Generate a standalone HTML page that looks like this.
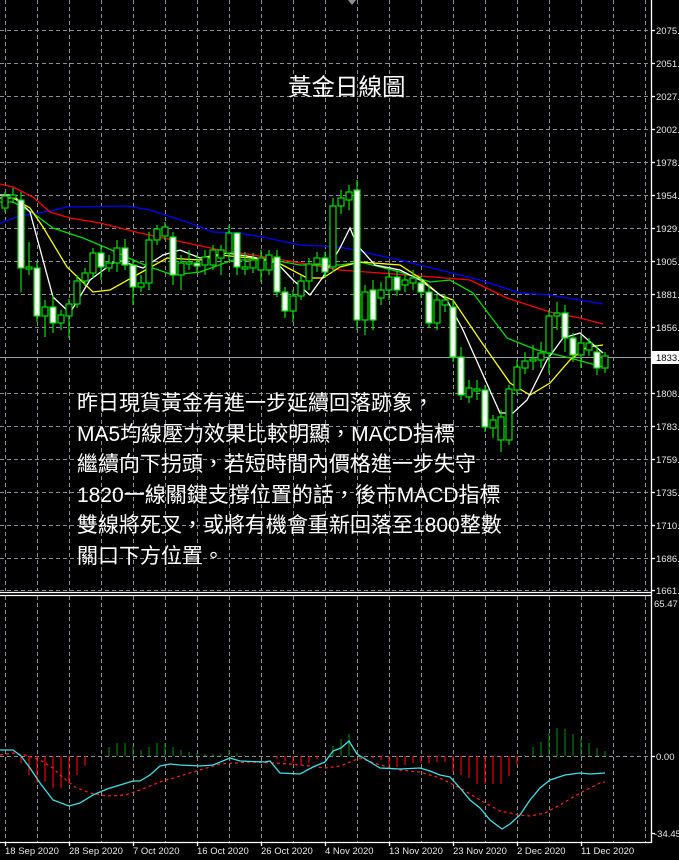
<!DOCTYPE html>
<html><head><meta charset="utf-8"><style>
html,body{margin:0;padding:0;background:#000;width:679px;height:860px;overflow:hidden}
svg{position:absolute;left:0;top:0}
.t{position:absolute;color:#fff;font-family:"Liberation Sans","Noto Sans CJK TC",sans-serif;white-space:nowrap}
</style></head><body>
<svg width="679" height="860" viewBox="0 0 679 860">
<rect width="679" height="860" fill="#000"/>
<g stroke="#8a909a" stroke-width="1" stroke-dasharray="4,3" fill="none">
<path d="M0 30.5H651M0 63.5H651M0 96.5H651M0 129.5H651M0 162.5H651M0 195.5H651M0 228.5H651M0 261.5H651M0 294.5H651M0 327.5H651M0 393.5H651M0 426.5H651M0 459.5H651M0 492.5H651M0 525.5H651M0 558.5H651M0 590.5H651"/>
<path d="M5.5 0V591M37.5 0V591M69.5 0V591M101.5 0V591M133.5 0V591M165.5 0V591M197.5 0V591M229.5 0V591M261.5 0V591M293.5 0V591M325.5 0V591M357.5 0V591M389.5 0V591M421.5 0V591M453.5 0V591M485.5 0V591M517.5 0V591M549.5 0V591M581.5 0V591M613.5 0V591M645.5 0V591"/>
<path d="M5.5 596V842M37.5 596V842M69.5 596V842M101.5 596V842M133.5 596V842M165.5 596V842M197.5 596V842M229.5 596V842M261.5 596V842M293.5 596V842M325.5 596V842M357.5 596V842M389.5 596V842M421.5 596V842M453.5 596V842M485.5 596V842M517.5 596V842M549.5 596V842M581.5 596V842M613.5 596V842M645.5 596V842"/>
<path d="M0 756.5H651"/>
</g>
<path d="M348 0L352 5L356 0Z" fill="#8a909a"/>
<line x1="0" y1="357.5" x2="651" y2="357.5" stroke="#9aa0a8"/>
<g fill="none" stroke-width="1.3">
<polyline stroke="#0000ff" points="0,223 20,216 50,211 67,207 127,206 150,210 187,222 213,232 240,233 267,238 300,245 340,247 400,260 440,270 480,280 520,293 550,295 603,304"/>
<polyline stroke="#ff0000" points="0,184 13,187 33,197 50,212 70,218 100,223 140,233 173,240 220,250 253,255 283,260 340,270 380,273 420,276 470,280 507,298 550,312 580,318 603,324"/>
<polyline stroke="#00dd00" points="0,202 13,202 33,213 53,228 83,238 107,248 133,260 150,267 173,275 200,272 233,260 273,260 300,265 340,265 360,262 400,272 430,282 450,280 473,293 507,338 537,350 570,358 603,367"/>
<polyline stroke="#ffff00" points="0,198 13,198 30,208 43,227 67,267 93,292 110,290 133,277 167,258 200,260 220,255 240,257 273,260 307,278 323,278 340,267 360,262 400,265 420,278 440,295 453,300 480,340 510,383 530,395 550,383 570,360 587,347 603,345"/>
<polyline stroke="#ffffff" points="0,195 13,195 30,212 53,297 70,313 90,280 117,260 143,268 163,255 180,250 200,258 227,253 253,257 277,263 293,280 310,295 323,277 340,248 350,228 357,245 375,265 400,270 420,280 447,300 463,330 500,413 513,413 527,400 547,360 563,338 580,333 603,353"/>
</g>
<g stroke="#00e000" stroke-width="1.2">
<path fill="none" d="M5 192V212M13 188V203M21 192V292M29 242V275M37 262V322M45 300V337M53 295V333M61 310V330M69 299V338M77 275V308M85 268V286M93 248V278M101 245V280M109 255V272M117 240V272M125 239V270M133 260V305M141 275V292M149 232V290M157 225V245M165 222V240M173 232V285M181 255V290M189 250V270M197 255V272M205 250V275M213 245V270M221 245V275M229 225V260M237 232V275M245 252V275M253 253V273M261 250V282M269 250V275M277 250V297M285 287V318M293 290V322M301 275V300M309 258V290M317 252V272M325 252V278M333 198V272M341 190V214M349 185V210M357 180V330M365 285V335M373 280V330M381 282V305M389 268V300M397 270V296M405 273V292M413 270V290M421 276V298M429 285V328M437 294V330M445 295V312M453 300V362M461 347V400M469 380V403M477 380V400M485 385V432M493 415V438M501 410V452M509 385V445M517 360V395M525 352V374M533 345V370M541 342V368M549 310V373M557 302V330M565 305V352M573 333V362M581 335V368M589 338V356M597 345V375M605 352V373"/>
<g fill="#000">
<rect x="2" y="196" width="6" height="12"/><rect x="10" y="195" width="6" height="3"/><rect x="26" y="267" width="6" height="2"/><rect x="42" y="307" width="6" height="9"/><rect x="58" y="315" width="6" height="8"/><rect x="66" y="304" width="6" height="12"/><rect x="74" y="281" width="6" height="23"/><rect x="82" y="273" width="6" height="8"/><rect x="90" y="253" width="6" height="20"/><rect x="106" y="263" width="6" height="5"/><rect x="114" y="248" width="6" height="15"/><rect x="138" y="283" width="6" height="4"/><rect x="146" y="240" width="6" height="43"/><rect x="154" y="229" width="6" height="11"/><rect x="162" y="227" width="6" height="9"/><rect x="178" y="263" width="6" height="12"/><rect x="186" y="262" width="6" height="2"/><rect x="202" y="257" width="6" height="8"/><rect x="210" y="250" width="6" height="15"/><rect x="218" y="250" width="6" height="8"/><rect x="226" y="233" width="6" height="20"/><rect x="242" y="267" width="6" height="2"/><rect x="250" y="260" width="6" height="8"/><rect x="258" y="258" width="6" height="12"/><rect x="266" y="255" width="6" height="15"/><rect x="290" y="296" width="6" height="15"/><rect x="298" y="281" width="6" height="15"/><rect x="306" y="264" width="6" height="17"/><rect x="314" y="258" width="6" height="6"/><rect x="330" y="206" width="6" height="61"/><rect x="338" y="198" width="6" height="8"/><rect x="346" y="192" width="6" height="8"/><rect x="362" y="292" width="6" height="28"/><rect x="378" y="290" width="6" height="8"/><rect x="386" y="277" width="6" height="13"/><rect x="402" y="280" width="6" height="5"/><rect x="410" y="278" width="6" height="5"/><rect x="434" y="300" width="6" height="23"/><rect x="442" y="300" width="6" height="5"/><rect x="466" y="388" width="6" height="9"/><rect x="474" y="389" width="6" height="2"/><rect x="490" y="420" width="6" height="8"/><rect x="498" y="417" width="6" height="23"/><rect x="506" y="389" width="6" height="51"/><rect x="514" y="367" width="6" height="23"/><rect x="522" y="361" width="6" height="7"/><rect x="530" y="359" width="6" height="2"/><rect x="538" y="353" width="6" height="7"/><rect x="546" y="316" width="6" height="37"/><rect x="554" y="313" width="6" height="3"/><rect x="578" y="343" width="6" height="12"/><rect x="586" y="343" width="6" height="7"/><rect x="602" y="356" width="6" height="12"/>
</g>
<g fill="#fff">
<rect x="18" y="200" width="6" height="68"/><rect x="34" y="268" width="6" height="48"/><rect x="50" y="307" width="6" height="16"/><rect x="98" y="253" width="6" height="14"/><rect x="122" y="248" width="6" height="17"/><rect x="130" y="265" width="6" height="22"/><rect x="170" y="237" width="6" height="38"/><rect x="194" y="263" width="6" height="3"/><rect x="234" y="233" width="6" height="34"/><rect x="274" y="257" width="6" height="35"/><rect x="282" y="292" width="6" height="19"/><rect x="322" y="258" width="6" height="14"/><rect x="354" y="190" width="6" height="130"/><rect x="370" y="290" width="6" height="30"/><rect x="394" y="277" width="6" height="13"/><rect x="418" y="283" width="6" height="9"/><rect x="426" y="292" width="6" height="31"/><rect x="450" y="307" width="6" height="50"/><rect x="458" y="357" width="6" height="38"/><rect x="482" y="390" width="6" height="37"/><rect x="562" y="313" width="6" height="25"/><rect x="570" y="338" width="6" height="17"/><rect x="594" y="352" width="6" height="16"/>
</g>
</g>
<path stroke="#ff0000" stroke-width="1.1" fill="none" d="M21 756V763M29 756V775M37 756V783M45 756V782M53 756V788M61 756V788M69 756V783M77 756V775M85 756V766M277 756V759M285 756V761M293 756V763M301 756V765M309 756V763M317 756V759M373 756V758M381 756V760M389 756V765M397 756V767M405 756V765M413 756V763M421 756V763M429 756V763M437 756V762M445 756V762M453 756V772M461 756V775M469 756V778M477 756V784M485 756V784M493 756V784M501 756V784M509 756V776M517 756V765"/>
<path stroke="#008800" stroke-width="1.1" fill="none" d="M109 756V747M117 756V743M125 756V743M133 756V746M141 756V750M149 756V747M157 756V743M165 756V743M173 756V747M181 756V750M189 756V752M197 756V753M205 756V754M213 756V754M221 756V754M229 756V750M237 756V753M245 756V755M333 756V746M341 756V739M349 756V734M525 756V755M533 756V747M541 756V742M549 756V733M557 756V728M565 756V729M573 756V734M581 756V738M589 756V743M597 756V748M605 756V751"/>
<polyline fill="none" stroke="#ff2020" stroke-width="1.2" stroke-dasharray="3,3" points="0,755 13,753 25,755 40,760 53,768 60,775 75,787 90,793 107,796 125,795 140,790 160,782 180,776 200,770 220,764 250,762 275,763 290,764 310,766 325,768 340,766 360,758 380,765 400,770 420,772 440,778 460,788 480,800 500,811 520,815 530,816 545,813 560,805 580,793 600,783 605,782"/>
<polyline fill="none" stroke="#40e0e8" stroke-width="1.3" points="0,750 13,750 21,756 30,768 40,783 53,800 69,806 80,803 93,795 107,789 120,785 133,781 140,781 150,775 160,766 170,764 180,765 200,766 213,765 230,758 240,761 265,762 270,761 280,773 300,774 313,767 325,762 333,751 341,748 349,741 357,754 370,762 380,768 400,769 420,768 430,771 440,775 450,777 460,788 470,800 480,808 490,820 502,829 510,824 520,815 530,800 540,788 550,780 565,775 580,773 590,774 605,773"/>
<g stroke="#fff" stroke-width="1.3">
<line x1="651.5" y1="0" x2="651.5" y2="843"/>
<line x1="0" y1="592.5" x2="652" y2="592.5"/>
<line x1="0" y1="595.5" x2="652" y2="595.5"/>
<line x1="0" y1="842.5" x2="652" y2="842.5"/>
<path d="M651 30.5h4M651 63.5h4M651 96.5h4M651 129.5h4M651 162.5h4M651 195.5h4M651 228.5h4M651 261.5h4M651 294.5h4M651 327.5h4M651 393.5h4M651 426.5h4M651 459.5h4M651 492.5h4M651 525.5h4M651 558.5h4M651 590.5h4M651 756.5h4M651 833.5h4M5.5 842v4M69.5 842v4M133.5 842v4M197.5 842v4M261.5 842v4M325.5 842v4M389.5 842v4M453.5 842v4M517.5 842v4M581.5 842v4"/>
</g>
<rect x="652" y="351" width="27" height="13" fill="#fff"/>
<g font-family="Liberation Sans, sans-serif" font-size="9.5" fill="#e8e8e8">
<text x="656" y="34">2075.</text><text x="656" y="67">2051.</text><text x="656" y="100">2027.</text><text x="656" y="133">2002.</text><text x="656" y="166">1978.</text><text x="656" y="199">1954.</text><text x="656" y="232">1929.</text><text x="656" y="265">1905.</text><text x="656" y="298">1881.</text><text x="656" y="331">1856.</text><text x="656" y="361" fill="#000">1833.</text><text x="656" y="397">1808.</text><text x="656" y="430">1783.</text><text x="656" y="463">1759.</text><text x="656" y="496">1735.</text><text x="656" y="529">1710.</text><text x="656" y="562">1686.</text><text x="656" y="594">1661.</text>
<text x="654" y="607">65.47</text><text x="656" y="760">0.00</text><text x="654" y="837">-34.45</text>
<text x="5" y="854">18 Sep 2020</text><text x="69" y="854">28 Sep 2020</text><text x="133" y="854">7 Oct 2020</text><text x="197" y="854">16 Oct 2020</text><text x="261" y="854">26 Oct 2020</text><text x="325" y="854">4 Nov 2020</text><text x="389" y="854">13 Nov 2020</text><text x="453" y="854">23 Nov 2020</text><text x="517" y="854">2 Dec 2020</text><text x="581" y="854">11 Dec 2020</text>
</g>
</svg>
<div class="t" style="left:288px;top:72px;font-size:23.5px;line-height:30px">黃金日線圖</div>
<div class="t" style="left:77px;top:389px;font-size:21px;line-height:30.6px">昨日現貨黃金有進一步延續回落跡象，<br>MA5均線壓力效果比較明顯，MACD指標<br>繼續向下拐頭，若短時間內價格進一步失守<br>1820一線關鍵支撐位置的話，後市MACD指標<br>雙線將死叉，或將有機會重新回落至1800整數<br>關口下方位置。</div>
</body></html>
